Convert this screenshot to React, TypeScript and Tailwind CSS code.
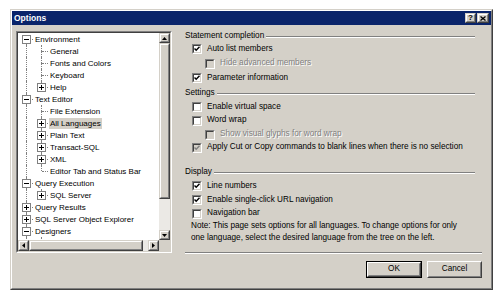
import React from "react";

type Row = { t: string; l: number; e?: "+" | "-"; first?: boolean; last?: boolean; sel?: boolean };

const rows: Row[] = [
  { t: "Environment", l: 0, e: "-", first: true },
  { t: "General", l: 1 },
  { t: "Fonts and Colors", l: 1 },
  { t: "Keyboard", l: 1 },
  { t: "Help", l: 1, e: "+", last: true },
  { t: "Text Editor", l: 0, e: "-" },
  { t: "File Extension", l: 1 },
  { t: "All Languages", l: 1, e: "+", sel: true },
  { t: "Plain Text", l: 1, e: "+" },
  { t: "Transact-SQL", l: 1, e: "+" },
  { t: "XML", l: 1, e: "+" },
  { t: "Editor Tab and Status Bar", l: 1, last: true },
  { t: "Query Execution", l: 0, e: "-" },
  { t: "SQL Server", l: 1, e: "+", last: true },
  { t: "Query Results", l: 0, e: "+" },
  { t: "SQL Server Object Explorer", l: 0, e: "+" },
  { t: "Designers", l: 0, e: "-" },
  { t: "Table and Database Designers", l: 1 },
];

function Expander({ e }: { e: "+" | "-" }) {
  return (
    <span className="absolute left-[3px] top-[2px] w-[9px] h-[9px] border border-[#808080] bg-white">
      <span className="absolute left-[1px] top-[3px] w-[5px] h-px bg-black" />
      {e === "+" && <span className="absolute left-[3px] top-[1px] w-px h-[5px] bg-black" />}
    </span>
  );
}

function TreeRow({ r }: { r: Row }) {
  const own = (
    <span className="relative w-[15px] h-[12px] shrink-0">
      {!(r.l === 0 && r.first) && (
        <span className="absolute left-[7px] top-0 h-[6px] border-l border-dotted border-[#808080]" />
      )}
      {!r.last && (
        <span className="absolute left-[7px] top-[6px] bottom-0 border-l border-dotted border-[#808080]" />
      )}
      <span className="absolute left-[8px] right-[1px] top-[6px] border-t border-dotted border-[#808080]" />
      {r.e && <Expander e={r.e} />}
    </span>
  );
  return (
    <div className="flex h-[12px] items-center">
      {r.l === 1 && (
        <span className="relative w-[15px] h-[12px] shrink-0">
          <span className="absolute left-[7px] top-0 bottom-0 border-l border-dotted border-[#808080]" />
        </span>
      )}
      {own}
      <span
        className={
          "px-[1px] leading-[11px] whitespace-nowrap " + (r.sel ? "bg-[#d4d0c8]" : "")
        }
      >
        {r.t}
      </span>
    </div>
  );
}

function Raised({ className, children }: { className?: string; children?: React.ReactNode }) {
  return (
    <div
      className={
        "bg-[#d4d0c8] border border-t-[#d4d0c8] border-l-[#d4d0c8] border-b-[#404040] border-r-[#404040] " +
        (className || "")
      }
    >
      <div className="w-full h-full border border-t-white border-l-white border-b-[#808080] border-r-[#808080] flex items-center justify-center">
        {children}
      </div>
    </div>
  );
}

function Tri({ dir }: { dir: "up" | "down" | "left" | "right" }) {
  const pts =
    dir === "up"
      ? "0,3 5,3 2.5,0"
      : dir === "down"
      ? "0,0 5,0 2.5,3"
      : dir === "left"
      ? "3,0 3,5 0,2.5"
      : "0,0 0,5 3,2.5";
  const w = dir === "up" || dir === "down" ? 5 : 3;
  const h = dir === "up" || dir === "down" ? 3 : 5;
  return (
    <svg width={w} height={h} viewBox={`0 0 ${w} ${h}`}>
      <polygon points={pts} fill="#000" />
    </svg>
  );
}

function Check({ checked, disabled }: { checked?: boolean; disabled?: boolean }) {
  return (
    <span className="w-[10px] h-[10px] shrink-0 border border-t-[#808080] border-l-[#808080] border-b-white border-r-white">
      <span
        className={
          "flex w-full h-full items-center justify-center border border-t-[#404040] border-l-[#404040] border-b-[#d4d0c8] border-r-[#d4d0c8] " +
          (disabled ? "bg-[#d4d0c8]" : "bg-white")
        }
      >
        {checked && (
          <svg width="6" height="6" viewBox="0 0 6 6">
            <path d="M0.5 2.5 L2.2 4.3 L5.5 0.8" stroke={disabled ? "#808080" : "#000"} strokeWidth="1.4" fill="none" />
          </svg>
        )}
      </span>
    </span>
  );
}

function CheckRow({
  label,
  checked,
  disabled,
  boxDisabled,
  indent,
  h,
}: {
  label: string;
  checked?: boolean;
  disabled?: boolean;
  boxDisabled?: boolean;
  indent?: boolean;
  h: string;
}) {
  return (
    <div className={"flex items-center gap-[5px] " + h + (indent ? " pl-[20px]" : " pl-[7px]")}>
      <Check checked={checked} disabled={disabled || boxDisabled} />
      <span
        className={
          "whitespace-nowrap " + (disabled ? "text-[#808080] [text-shadow:1px_1px_0_#ffffff]" : "text-black")
        }
      >
        {label}
      </span>
    </div>
  );
}

function Header({ label, h }: { label: string; h: string }) {
  return (
    <div className={"flex items-center gap-[2px] mr-[7px] " + h}>
      <span className="whitespace-nowrap">{label}</span>
      <span className="flex-1 h-[2px] border-t border-t-[#808080] border-b border-b-white mt-[1px]" />
    </div>
  );
}

function Button({ label, def }: { label: string; def?: boolean }) {
  const inner = (
    <div className="w-full h-full border border-t-white border-l-white border-b-[#404040] border-r-[#404040]">
      <div className="w-full h-full border border-t-[#d4d0c8] border-l-[#d4d0c8] border-b-[#808080] border-r-[#808080] flex items-center justify-center">
        {label}
      </div>
    </div>
  );
  return def ? (
    <div className="w-[56px] h-[17px] border border-black bg-[#d4d0c8]">{inner}</div>
  ) : (
    <div className="w-[55px] h-[17px] bg-[#d4d0c8]">{inner}</div>
  );
}

export default function App() {
  return (
    <div
      className="w-[500px] h-[297px] bg-white pt-[9px] pl-[10px] text-[8px] text-black"
      style={{ fontFamily: '"Liberation Sans", Arial, sans-serif' }}
    >
      <div className="w-[483px] h-[281px] border border-t-[#d4d0c8] border-l-[#d4d0c8] border-b-[#404040] border-r-[#404040]">
        <div className="w-full h-full bg-[#d4d0c8] border border-t-white border-l-white border-b-[#808080] border-r-[#808080] flex flex-col">
          {/* title bar */}
          <div className="h-[14px] bg-[#0a246a] flex items-center pl-[2px] pr-[2px] shrink-0">
            <span className="text-white font-bold text-[8.5px] flex-1">Options</span>
            <Raised className="w-[11px] h-[10px]">
              <span className="font-bold text-[8px] leading-none">?</span>
            </Raised>
            <Raised className="w-[12px] h-[10px] ml-[1px]">
              <svg width="6" height="5" viewBox="0 0 6 5">
                <path d="M0.5 0.5 L5.5 4.5 M5.5 0.5 L0.5 4.5" stroke="#000" strokeWidth="1.3" />
              </svg>
            </Raised>
          </div>
          {/* body */}
          <div className="flex flex-1 min-h-0">
            {/* tree */}
            <div className="ml-[4px] mt-[6px] w-[156px] h-[222px] shrink-0 border border-t-[#808080] border-l-[#808080] border-b-white border-r-white">
              <div className="w-full h-full border border-t-[#404040] border-l-[#404040] border-b-[#d4d0c8] border-r-[#d4d0c8] flex flex-col">
                <div className="flex flex-1 min-h-0">
                  <div className="flex-1 bg-white overflow-hidden pl-[1px]">
                    {rows.map((r, i) => (
                      <TreeRow key={i} r={r} />
                    ))}
                  </div>
                  <div className="w-[11px] flex flex-col bg-[#ebe9e5]">
                    <Raised className="h-[10px] shrink-0">
                      <Tri dir="up" />
                    </Raised>
                    <Raised className="h-[156px] shrink-0" />
                    <div className="flex-1" />
                    <Raised className="h-[10px] shrink-0">
                      <Tri dir="down" />
                    </Raised>
                  </div>
                </div>
                <div className="h-[11px] flex shrink-0">
                  <div className="flex-1 flex bg-[#ebe9e5]">
                    <Raised className="w-[11px] shrink-0">
                      <Tri dir="left" />
                    </Raised>
                    <Raised className="w-[114px] shrink-0" />
                    <div className="flex-1" />
                    <Raised className="w-[11px] shrink-0">
                      <Tri dir="right" />
                    </Raised>
                  </div>
                  <div className="w-[11px] bg-[#d4d0c8]" />
                </div>
              </div>
            </div>
            {/* right */}
            <div className="flex-1 flex flex-col pl-[13px] pr-[9px] pt-[5px] text-[8.2px]">
              <Header label="Statement completion" h="h-[12px]" />
              <CheckRow label="Auto list members" checked h="h-[14px]" />
              <CheckRow label="Hide advanced members" disabled indent h="h-[15px]" />
              <CheckRow label="Parameter information" checked h="h-[14px]" />
              <Header label="Settings" h="h-[16px]" />
              <CheckRow label="Enable virtual space" h="h-[12px]" />
              <CheckRow label="Word wrap" h="h-[15px]" />
              <CheckRow label="Show visual glyphs for word wrap" disabled indent h="h-[13px]" />
              <CheckRow
                label="Apply Cut or Copy commands to blank lines when there is no selection"
                checked
                boxDisabled
                h="h-[13px]"
              />
              <div className="h-[12px]" />
              <Header label="Display" h="h-[13px]" />
              <CheckRow label="Line numbers" checked h="h-[14px]" />
              <CheckRow label="Enable single-click URL navigation" checked h="h-[14px]" />
              <CheckRow label="Navigation bar" h="h-[13px]" />
              <div className="pl-[6px] leading-[12px] whitespace-nowrap">
                <div>Note: This page sets options for all languages. To change options for only</div>
                <div>one language, select the desired language from the tree on the left.</div>
              </div>
              <div className="mt-[8px] h-[2px] border-t border-t-[#808080] border-b border-b-white" />
              <div className="mt-[7px] flex justify-end gap-[5px]">
                <Button label="OK" def />
                <Button label="Cancel" />
              </div>
            </div>
          </div>
        </div>
      </div>
    </div>
  );
}
